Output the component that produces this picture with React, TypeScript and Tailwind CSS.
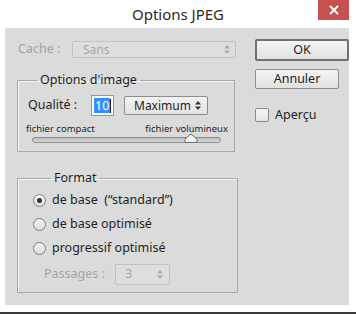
import React from 'react'

const font = { fontFamily: '"Noto Sans", "Open Sans", sans-serif' }

function Spinner({ disabled }: { disabled?: boolean }) {
  const c = disabled ? '#a9a9a9' : '#333'
  return (
    <svg width="6" height="9" viewBox="0 0 6 9">
      <path d="M3 0L6 3.5H0z" fill={c} />
      <path d="M3 9L0 5.5H6z" fill={c} />
    </svg>
  )
}

function Radio({ checked, label }: { checked?: boolean; label: string }) {
  return (
    <div className="flex items-center gap-[6px] h-[20px]">
      <span className="w-[13px] h-[13px] rounded-full border border-[#7f7f7f] bg-gradient-to-b from-[#f4f4f4] to-[#dcdcdc] flex items-center justify-center">
        {checked && <span className="w-[5px] h-[5px] rounded-full bg-[#333]" />}
      </span>
      <span className="text-[12.5px] text-[#1e1e1e] whitespace-pre">{label}</span>
    </div>
  )
}

export default function App() {
  return (
    <div className="w-[356px] h-[314px] bg-white flex flex-col" style={font}>
      <div className="h-[28px] flex relative">
        <div className="flex-1 flex items-center justify-center text-[15px] text-[#2a2a2a] pt-[1px]">Options JPEG</div>
        <div className="absolute right-[7px] top-0 w-[31px] h-[20px] bg-[#c75050] flex items-center justify-center">
          <svg width="10" height="10" viewBox="0 0 10 10">
            <path d="M1 1L9 9M9 1L1 9" stroke="#fff" strokeWidth="2" />
          </svg>
        </div>
      </div>

      <div className="ml-[5px] w-[344px] h-[277px] bg-[#dbdbdb] flex gap-[16px] pl-[12px]">
        <div className="w-[225px] flex flex-col pt-[13px]">
          <div className="flex items-center h-[17px]">
            <span className="w-[55px] text-[12.5px] text-[#a4a4a4] pl-[1px]">Cache :</span>
            <div className="w-[164px] h-[17px] border border-[#c2c2c2] rounded-[2px] bg-[#dedede] flex items-center justify-between pl-[10px] pr-[5px]">
              <span className="text-[12px] text-[#a6a6a6]">Sans</span>
              <Spinner disabled />
            </div>
          </div>

          <fieldset className="mt-[14px] w-[218px] h-[80px] border border-[#a9a9a9] shadow-[inset_1px_1px_0_#f4f4f4] pl-[10px]">
            <legend className="ml-[9px] px-[3px] text-[12.5px] text-[#1e1e1e] leading-[16px]">Options d'image</legend>
            <div className="flex items-center mt-[7px] h-[21px]">
              <span className="w-[63px] text-[12.5px] text-[#1e1e1e]">Qualité :</span>
              <div className="w-[23px] h-[21px] border border-[#66a0e0] bg-white flex items-center pl-[2px]">
                <span className="bg-[#3390ff] text-white text-[12.5px] leading-[15px] px-[1px]">10</span>
                <span className="w-[1px] h-[14px] bg-[#222]" />
              </div>
              <div className="ml-[10px] w-[84px] h-[19px] border border-[#8c8c8c] rounded-[2px] bg-gradient-to-b from-[#f2f2f2] to-[#e4e4e4] flex items-center justify-between pl-[9px] pr-[6px]">
                <span className="text-[12px] text-[#1e1e1e]">Maximum</span>
                <Spinner />
              </div>
            </div>
            <div className="flex justify-between mt-[6px] pr-[6px] -ml-[2px]">
              <span className="text-[9.5px] text-[#1e1e1e] leading-[13px]">fichier compact</span>
              <span className="text-[9.5px] text-[#1e1e1e] leading-[13px]">fichier volumineux</span>
            </div>
            <div className="relative mt-[2px] ml-[4px] w-[189px] h-[6px] rounded-full border border-[#8a8a8a] bg-gradient-to-b from-[#bdbdbd] to-[#d6d6d6]">
              <svg className="absolute left-[151px] -top-[5px]" width="14" height="10" viewBox="0 0 14 10">
                <path d="M1 9.5V6L7 1L13 6V9.5Z" fill="#f2f2f2" stroke="#6e6e6e" />
              </svg>
            </div>
          </fieldset>

          <fieldset className="mt-[18px] w-[221px] h-[123px] border border-[#a9a9a9] shadow-[inset_1px_1px_0_#f4f4f4] pl-[15px]">
            <legend className="ml-[18px] px-[3px] text-[12.5px] text-[#1e1e1e] leading-[16px]">Format</legend>
            <div className="flex flex-col gap-[4px] mt-[4px]">
              <Radio checked label={'de base  (“standard”)'} />
              <Radio label="de base optimisé" />
              <Radio label="progressif optimisé" />
            </div>
            <div className="flex items-center mt-[6px] pl-[11px]">
              <span className="w-[71px] text-[12.5px] text-[#a4a4a4]">Passages :</span>
              <div className="w-[55px] h-[21px] border border-[#c2c2c2] rounded-[2px] bg-[#dedede] flex items-center justify-between pl-[9px] pr-[6px]">
                <span className="text-[12.5px] text-[#a6a6a6]">3</span>
                <Spinner disabled />
              </div>
            </div>
          </fieldset>
        </div>

        <div className="flex flex-col pt-[11px]">
          <div className="w-[94px] h-[22px] border-2 border-[#707070] rounded-[2px] bg-gradient-to-b from-[#f4f4f4] to-[#e2e2e2] flex items-center justify-center text-[12.5px] text-[#1e1e1e]">OK</div>
          <div className="mt-[8px] w-[84px] h-[20px] border border-[#8c8c8c] rounded-[2px] bg-gradient-to-b from-[#f4f4f4] to-[#e2e2e2] flex items-center justify-center text-[12.5px] text-[#1e1e1e]">Annuler</div>
          <div className="mt-[17px] flex items-center gap-[6px]">
            <span className="w-[14px] h-[14px] border border-[#8a8a8a] rounded-[2px] bg-gradient-to-b from-[#f6f6f6] to-[#e4e4e4]" />
            <span className="text-[12.5px] text-[#1e1e1e]">Aperçu</span>
          </div>
        </div>
      </div>

      <div className="flex-1" />
      <div className="h-[2px] bg-[#3a3a3a]" />
    </div>
  )
}
